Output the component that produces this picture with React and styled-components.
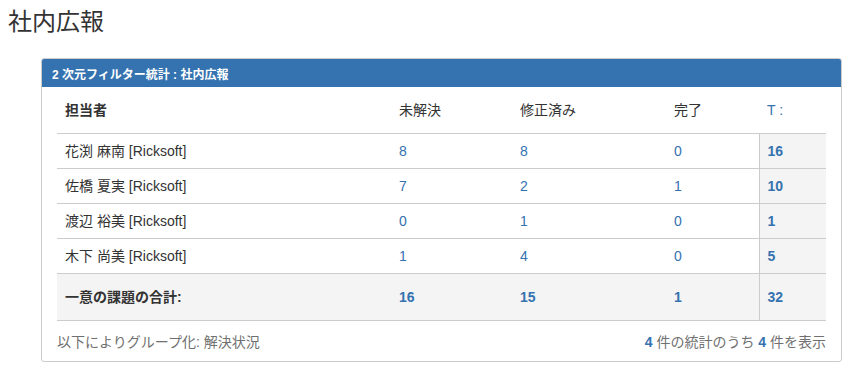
import React from "react";
import styled, { createGlobalStyle } from "styled-components";

const Global = createGlobalStyle`
  html, body { margin: 0; padding: 0; background: #fff; }
  body {
    font-family: "Liberation Sans", "Noto Sans CJK JP", sans-serif;
    font-size: 14px;
    color: #333;
  }
`;

const Page = styled.div`
  padding: 8px;
`;

const Title = styled.h1`
  margin: 0;
  font-size: 24px;
  line-height: 28px;
  font-weight: normal;
  color: #333;
`;

const Panel = styled.section`
  margin: 22px 0 0 33px;
  width: 801px;
  box-sizing: border-box;
  border: 1px solid #ccc;
  border-radius: 3px;
  overflow: hidden;
`;

const PanelHeader = styled.div`
  background: #3572b0;
  color: #fff;
  height: 28px;
  display: flex;
  align-items: center;
  padding: 0 10px;
  font-size: 12px;
  font-weight: bold;
`;

const PanelBody = styled.div`
  padding: 0 15px;
`;

const Table = styled.table`
  width: 769px;
  border-collapse: collapse;
  table-layout: fixed;
`;

const Th = styled.th`
  text-align: left;
  padding: 13px 8px;
  line-height: 20px;
  font-size: 14px;
  font-weight: ${(p) => (p.$bold ? "bold" : "normal")};
  color: ${(p) => (p.$link ? "#3572b0" : "#333")};
  border-bottom: 1px solid #ccc;
`;

const Td = styled.td`
  padding: ${(p) => (p.$total ? "13px 8px" : "7px 8px")};
  line-height: 20px;
  font-size: 14px;
  border-bottom: 1px solid #ccc;
  color: ${(p) => (p.$link ? "#3572b0" : "#333")};
  font-weight: ${(p) => (p.$bold ? "bold" : "normal")};
  background: ${(p) => (p.$shade ? "#f4f4f4" : "transparent")};
  border-left: ${(p) => (p.$divider ? "1px solid #ccc" : "none")};
  white-space: nowrap;
`;

const Footer = styled.div`
  height: 40px;
  display: flex;
  align-items: center;
  justify-content: space-between;
  color: #707070;
  font-size: 14px;
`;

const Num = styled.b`
  color: #3572b0;
`;

const rows = [
  { name: "花渕 麻南 [Ricksoft]", v: [8, 8, 0], t: 16 },
  { name: "佐橋 夏実 [Ricksoft]", v: [7, 2, 1], t: 10 },
  { name: "渡辺 裕美 [Ricksoft]", v: [0, 1, 0], t: 1 },
  { name: "木下 尚美 [Ricksoft]", v: [1, 4, 0], t: 5 },
];

export default function App() {
  return (
    <Page>
      <Global />
      <Title>社内広報</Title>
      <Panel>
        <PanelHeader>2 次元フィルター統計 : 社内広報</PanelHeader>
        <PanelBody>
          <Table>
            <colgroup>
              <col style={{ width: 334 }} />
              <col style={{ width: 121 }} />
              <col style={{ width: 154 }} />
              <col style={{ width: 93 }} />
              <col style={{ width: 67 }} />
            </colgroup>
            <thead>
              <tr>
                <Th $bold>担当者</Th>
                <Th>未解決</Th>
                <Th>修正済み</Th>
                <Th>完了</Th>
                <Th $link>T :</Th>
              </tr>
            </thead>
            <tbody>
              {rows.map((r) => (
                <tr key={r.name}>
                  <Td>{r.name}</Td>
                  {r.v.map((n, i) => (
                    <Td key={i} $link>{n}</Td>
                  ))}
                  <Td $link $bold $shade $divider>{r.t}</Td>
                </tr>
              ))}
              <tr>
                <Td $total $bold $shade>一意の課題の合計:</Td>
                <Td $total $link $bold $shade>16</Td>
                <Td $total $link $bold $shade>15</Td>
                <Td $total $link $bold $shade>1</Td>
                <Td $total $link $bold $shade $divider>32</Td>
              </tr>
            </tbody>
          </Table>
          <Footer>
            <span>以下によりグループ化: 解決状況</span>
            <span>
              <Num>4</Num> 件の統計のうち <Num>4</Num> 件を表示
            </span>
          </Footer>
        </PanelBody>
      </Panel>
    </Page>
  );
}
